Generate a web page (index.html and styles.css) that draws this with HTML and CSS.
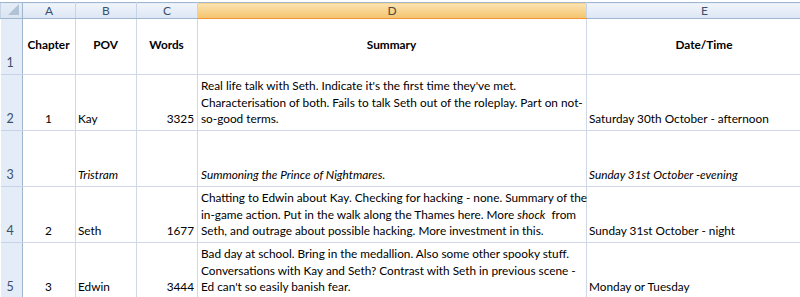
FILE: index.html
```html
<!DOCTYPE html>
<html>
<head>
<meta charset="utf-8" />
<title>Chapters</title>
<link rel="stylesheet" href="styles.css">
</head>
<body>
<div class="sheet">
  <table class="grid">
    <colgroup>
      <col class="w-rh" /><col class="w-a" /><col class="w-b" /><col class="w-c" /><col class="w-d" /><col class="w-e" />
    </colgroup>
    <tr class="col-head">
      <th class="corner"><span class="tri"></span></th>
      <th>A</th><th>B</th><th>C</th><th class="sel">D</th><th>E</th>
    </tr>
    <tr>
      <td class="row-head">1</td>
      <td class="title">Chapter</td>
      <td class="title">POV</td>
      <td class="title">Words</td>
      <td class="title">Summary</td>
      <td class="title">Date/Time</td>
    </tr>
    <tr>
      <td class="row-head">2</td>
      <td class="mid">1</td>
      <td>Kay</td>
      <td class="num">3325</td>
      <td class="text">Real life talk with Seth. Indicate it's the first time they've met.<br />Characterisation of both. Fails to talk Seth out of the roleplay. Part on not-<br />so-good terms.</td>
      <td>Saturday 30th October - afternoon</td>
    </tr>
    <tr class="ital">
      <td class="row-head">3</td>
      <td class="mid"></td>
      <td>Tristram</td>
      <td class="num"></td>
      <td class="text">Summoning the Prince of Nightmares.</td>
      <td>Sunday 31st October -evening</td>
    </tr>
    <tr>
      <td class="row-head">4</td>
      <td class="mid">2</td>
      <td>Seth</td>
      <td class="num">1677</td>
      <td class="text">Chatting to Edwin about Kay. Checking for hacking - none. Summary of the<br />in-game action. Put in the walk along the Thames here. More <i>shock</i>&nbsp; from<br />Seth, and outrage about possible hacking. More investment in this.</td>
      <td>Sunday 31st October - night</td>
    </tr>
    <tr>
      <td class="row-head">5</td>
      <td class="mid">3</td>
      <td>Edwin</td>
      <td class="num">3444</td>
      <td class="text">Bad day at school. Bring in the medallion. Also some other spooky stuff.<br />Conversations with Kay and Seth? Contrast with Seth in previous scene -<br />Ed can't so easily banish fear.</td>
      <td>Monday or Tuesday</td>
    </tr>
  </table>
</div>
</body>
</html>
```

FILE: styles.css
```css
*{margin:0; padding:0;}
body{
	background:#fff;
	font-family:Lato, "Liberation Sans", sans-serif;
	font-size:11.8px;
	color:#000;
	overflow:hidden;
}
.sheet{
	width:800px;
	height:297px;
	overflow:hidden;
	padding-top:2px;
}
.grid{
	border-collapse:collapse;
	table-layout:fixed;
	width:822px;
}
.w-rh{width:22px;}
.w-a{width:53px;}
.w-b{width:61px;}
.w-c{width:61px;}
.w-d{width:389px;}
.w-e{width:236px;}
/*****************************************/
.col-head th{
	height:15px;
	padding:0;
	font-weight:normal;
	font-size:12px;
	line-height:15px;
	color:#3b4f6a;
	text-align:center;
	vertical-align:middle;
	background:linear-gradient(#f1f5fb, #dce6f4);
	border-top:1px solid #9eb6ce;
	border-bottom:1px solid #9eb6ce;
	border-left:1px solid #c5d4e6;
	border-right:1px solid #c5d4e6;
}
.col-head th.sel{
	background:linear-gradient(#fbe3b2, #f4c46c);
	border-bottom:1px solid #f29536;
	color:#4e4a40;
}
.col-head th.corner{
	position:relative;
	background:linear-gradient(#e6edf7, #dae4f1);
	border-right:1px solid #9eb6ce;
}
.tri{
	position:absolute;
	right:3px;
	bottom:3px;
	width:0;
	height:0;
	border-left:11px solid transparent;
	border-bottom:11px solid #b3c3d6;
}
/*****************************************/
td{
	height:53px;
	border:1px solid #d0d7e5;
	padding:0 3px 2px 2px;
	vertical-align:bottom;
	line-height:16.7px;
	white-space:nowrap;
	overflow:visible;
}
td.row-head{
	background:#e4ecf7;
	color:#3b4f6a;
	font-size:12.5px;
	padding-left:6px;
	border-right:1px solid #9eb6ce;
	border-left:none;
	border-top:1px solid #c5d4e6;
	border-bottom:1px solid #c5d4e6;
}
td.title{
	font-weight:bold;
	text-align:center;
	vertical-align:middle;
}
td.mid{
	text-align:center;
}
td.num{
	text-align:right;
}
td.text{
	padding-left:3px;
}
.ital td{
	font-style:italic;
}
.ital td.row-head{
	font-style:normal;
}
```
